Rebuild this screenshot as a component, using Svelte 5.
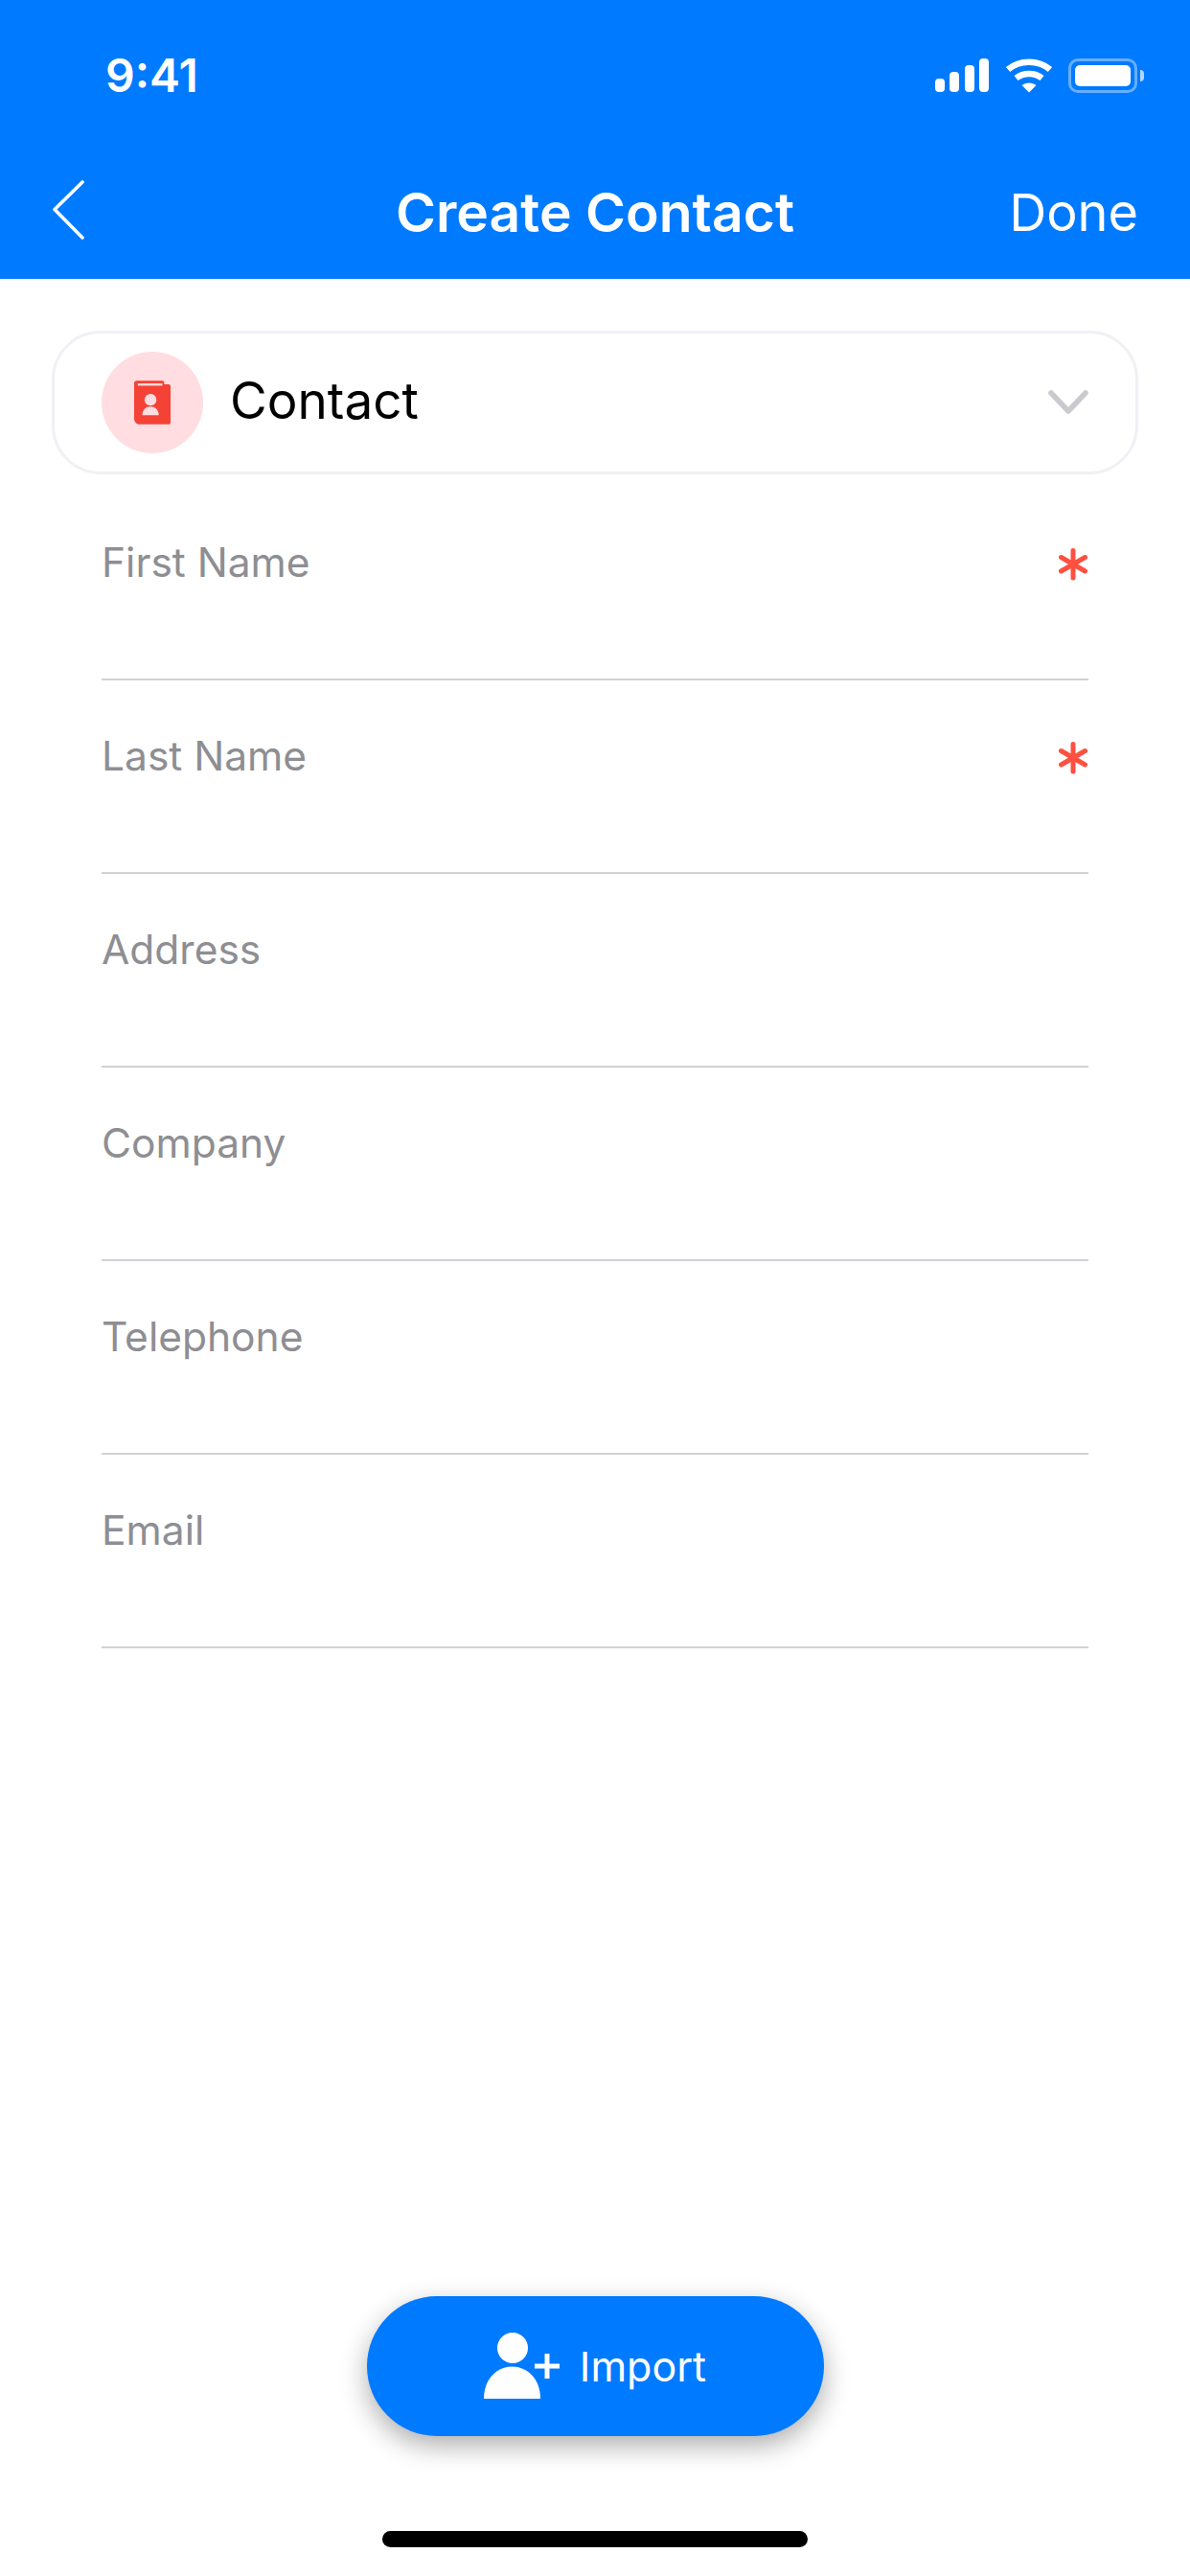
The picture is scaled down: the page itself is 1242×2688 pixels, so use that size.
<script>
  const fields = [
    { label: 'First Name', required: true },
    { label: 'Last Name', required: true },
    { label: 'Address', required: false },
    { label: 'Company', required: false },
    { label: 'Telephone', required: false },
    { label: 'Email', required: false }
  ];
</script>

<div class="screen">
  <header class="header">
    <div class="status">
      <span class="time">9:41</span>
      <div class="status-icons">
        <svg width="58" height="36" viewBox="0 0 58 36" fill="#fff">
          <rect x="1" y="21" width="10" height="14" rx="4" />
          <rect x="16" y="14" width="10" height="21" rx="4" />
          <rect x="32" y="7" width="10" height="28" rx="4" />
          <rect x="47" y="0" width="10" height="35" rx="4" />
        </svg>
        <svg width="50" height="36" viewBox="0 0 50 36" fill="none">
          <path d="M3 11.5C15 1 35 1 47 11.5" stroke="#fff" stroke-width="6.5" stroke-linecap="butt" />
          <path d="M11.5 20.5C19 14.5 31 14.5 38.5 20.5" stroke="#fff" stroke-width="6.5" />
          <path d="M17.5 28C21.5 24.5 28.5 24.5 32.5 28L25 35.5Z" fill="#fff" />
        </svg>
        <div class="battery">
          <div class="battery-body"><div class="battery-fill"></div></div>
          <div class="battery-cap"></div>
        </div>
      </div>
    </div>
    <div class="nav">
      <svg class="back" width="34" height="62" viewBox="0 0 34 62" fill="none">
        <path d="M32 2L3 30.5L32 60" stroke="#fff" stroke-width="3.6" stroke-linecap="round" stroke-linejoin="round" />
      </svg>
      <h1 class="title">Create Contact</h1>
      <span class="done">Done</span>
    </div>
  </header>

  <main class="content">
    <div class="picker">
      <div class="picker-icon">
        <svg width="38" height="46" viewBox="0 0 40 48">
          <path d="M3 0H31a2 2 0 0 1 2 2V4H38a2 2 0 0 1 2 2V46a2 2 0 0 1-2 2H6a6 6 0 0 1-6-6V3a3 3 0 0 1 3-3Z" fill="#f44336" />
          <rect x="4" y="3" width="27" height="2.5" fill="#fdd" />
          <circle cx="18" cy="21" r="6.5" fill="#fddde1" />
          <path d="M9 38c0-6 4-9.500 9-9.500s9 3.500 9 9.500Z" fill="#fddde1" />
        </svg>
      </div>
      <span class="picker-label">Contact</span>
      <svg class="chev" width="42" height="26" viewBox="0 0 42 26" fill="none">
        <path d="M3 3L21 22L39 3" stroke="#c9c9ce" stroke-width="5.500" stroke-linecap="round" stroke-linejoin="round" />
      </svg>
    </div>

    <div class="fields">
      {#each fields as f}
        <div class="field">
          <span class="label">{f.label}</span>
          {#if f.required}
            <svg class="star" width="32" height="34" viewBox="0 0 32 34" fill="none">
              <path d="M16 2.500V31M3.500 9.500L28.500 24M28.500 9.500L3.500 24" stroke="#ff5040" stroke-width="5" stroke-linecap="round" />
            </svg>
          {/if}
        </div>
      {/each}
    </div>
  </main>

  <div class="footer">
    <button class="import">
      <svg width="82" height="70" viewBox="0 0 82 70" fill="#fff">
        <circle cx="30" cy="16" r="16" />
        <path d="M0 69C0 49 13 35.500 29.500 35.500S59 49 59 69Z" />
        <path d="M53 35H79M66 22V48" stroke="#fff" stroke-width="5" fill="none" />
      </svg>
      <span>Import</span>
    </button>
    <div class="home"></div>
  </div>
</div>

<style>
  :global(body) {
    margin: 0;
    background: #fff;
  }
  .screen {
    width: 1242px;
    height: 2688px;
    display: flex;
    flex-direction: column;
    font-family: Inter, "Liberation Sans", sans-serif;
    background: #fff;
    overflow: hidden;
  }
  .header {
    height: 291px;
    flex: none;
    box-sizing: border-box;
    background: #007aff;
    color: #fff;
    padding-top: 52px;
  }
  .status {
    height: 54px;
    display: flex;
    align-items: center;
    justify-content: space-between;
    padding: 0 48px 0 110px;
  }
  .time {
    font-size: 48px;
    font-weight: 600;
    line-height: 54px;
  }
  .status-icons {
    display: flex;
    align-items: center;
    gap: 16px;
  }
  .battery {
    display: flex;
    align-items: center;
    gap: 3px;
  }
  .battery-body {
    width: 72px;
    height: 36px;
    box-sizing: border-box;
    border: 3px solid rgba(255, 255, 255, 0.4);
    border-radius: 10px;
    padding: 4px;
  }
  .battery-fill {
    width: 100%;
    height: 100%;
    background: #fff;
    border-radius: 5px;
  }
  .battery-cap {
    width: 4px;
    height: 12px;
    background: rgba(255, 255, 255, 0.7);
    border-radius: 0 4px 4px 0;
  }
  .nav {
    display: flex;
    align-items: center;
    justify-content: space-between;
    position: relative;
    height: 90px;
    margin-top: 71px;
    padding: 0 54px;
  }
  .back {
    flex: none;
    margin-top: -6px;
  }
  .title {
    position: absolute;
    left: 0;
    right: 0;
    margin: 0;
    text-align: center;
    font-size: 57px;
    font-weight: 600;
    line-height: 90px;
  }
  .done {
    font-size: 54px;
    line-height: 90px;
  }
  .content {
    flex: 1;
    padding: 54px 54px 0;
  }
  .picker {
    height: 150px;
    box-sizing: border-box;
    border: 3px solid #f0f0f5;
    border-radius: 51px;
    display: flex;
    align-items: center;
    padding: 0 49px 0 49px;
  }
  .picker-icon {
    width: 106px;
    height: 106px;
    border-radius: 50%;
    background: #ffdde1;
    display: flex;
    align-items: center;
    justify-content: center;
    flex: none;
  }
  .picker-label {
    font-size: 53px;
    color: #000;
    margin-left: 28px;
    flex: 1;
    margin-top: -4px;
  }
  .fields {
    padding: 13px 52px 0;
  }
  .field {
    height: 202px;
    box-sizing: border-box;
    border-bottom: 2px solid #d1d1d6;
    display: flex;
    justify-content: space-between;
    align-items: flex-start;
    padding-top: 54px;
  }
  .label {
    font-size: 42.5px;
    line-height: 50px;
    color: #8e8e93;
  }
  .star {
    margin-top: 10px;
  }
  .footer {
    flex: none;
    height: 292px;
    display: flex;
    flex-direction: column;
    align-items: center;
  }
  .import {
    width: 477px;
    height: 146px;
    flex: none;
    border: none;
    border-radius: 73px;
    background: #007aff;
    color: #fff;
    font-family: inherit;
    font-size: 43px;
    display: flex;
    align-items: center;
    justify-content: center;
    gap: 18px;
    padding: 0;
    box-shadow: 0 10px 28px rgba(0, 0, 0, 0.32);
  }
  .home {
    width: 444px;
    height: 17px;
    margin-top: 99px;
    border-radius: 9px;
    background: #000;
  }
</style>
